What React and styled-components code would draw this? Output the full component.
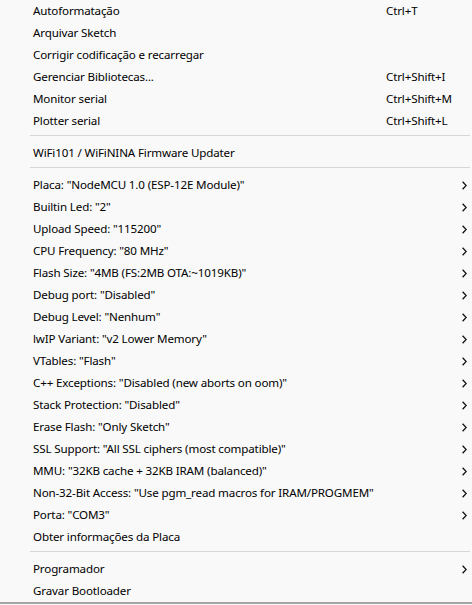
import styled, { createGlobalStyle } from 'styled-components';

const GlobalStyle = createGlobalStyle`
  html, body {
    margin: 0;
    padding: 0;
    background: #f9f9f9;
  }
  body {
    font-family: 'Noto Sans', 'Liberation Sans', sans-serif;
    font-size: 11.6px;
    letter-spacing: -0.15px;
    color: #000;
  }
`;

const groups = [
  [
    { label: 'Autoformatação', shortcut: 'Ctrl+T' },
    { label: 'Arquivar Sketch' },
    { label: 'Corrigir codificação e recarregar' },
    { label: 'Gerenciar Bibliotecas...', shortcut: 'Ctrl+Shift+I' },
    { label: 'Monitor serial', shortcut: 'Ctrl+Shift+M' },
    { label: 'Plotter serial', shortcut: 'Ctrl+Shift+L' },
  ],
  [{ label: 'WiFi101 / WiFiNINA Firmware Updater' }],
  [
    { label: 'Placa: "NodeMCU 1.0 (ESP-12E Module)"', sub: true },
    { label: 'Builtin Led: "2"', sub: true },
    { label: 'Upload Speed: "115200"', sub: true },
    { label: 'CPU Frequency: "80 MHz"', sub: true },
    { label: 'Flash Size: "4MB (FS:2MB OTA:~1019KB)"', sub: true },
    { label: 'Debug port: "Disabled"', sub: true },
    { label: 'Debug Level: "Nenhum"', sub: true },
    { label: 'lwIP Variant: "v2 Lower Memory"', sub: true },
    { label: 'VTables: "Flash"', sub: true },
    { label: 'C++ Exceptions: "Disabled (new aborts on oom)"', sub: true },
    { label: 'Stack Protection: "Disabled"', sub: true },
    { label: 'Erase Flash: "Only Sketch"', sub: true },
    { label: 'SSL Support: "All SSL ciphers (most compatible)"', sub: true },
    { label: 'MMU: "32KB cache + 32KB IRAM (balanced)"', sub: true },
    { label: 'Non-32-Bit Access: "Use pgm_read macros for IRAM/PROGMEM"', sub: true },
    { label: 'Porta: "COM3"', sub: true },
    { label: 'Obter informações da Placa' },
  ],
  [
    { label: 'Programador', sub: true },
    { label: 'Gravar Bootloader' },
  ],
];

function Chevron() {
  return (
    <svg width='5' height='9' viewBox='0 0 5 9'>
      <path d='M0.6 0.8 L4.2 4.5 L0.6 8.2' fill='none' stroke='#111' strokeWidth='1.3' />
    </svg>
  );
}

function App() {
  return (
    <>
      <GlobalStyle />
      <Menu>
        {groups.map((items, gi) => (
          <Group key={gi}>
            {gi > 0 && <Separator />}
            {items.map((item) => (
              <Item key={item.label}>
                <Label>{item.label}</Label>
                <Shortcut>{item.shortcut}</Shortcut>
                <Arrow>{item.sub && <Chevron />}</Arrow>
              </Item>
            ))}
          </Group>
        ))}
      </Menu>
    </>
  );
}

const Menu = styled.div`
  width: 472px;
  background: #f9f9f9;
  border-bottom: 2px solid #a5a5a5;
  box-sizing: border-box;
`;

const Group = styled.div`
  display: flex;
  flex-direction: column;
`;

const Separator = styled.div`
  height: 1px;
  background: #d7d7d7;
  margin: 3px 2px 6px 30px;
`;

const Item = styled.div`
  display: grid;
  grid-template-columns: minmax(0, 1fr) 67px 14px;
  align-items: center;
  height: 22px;
  box-sizing: border-box;
  padding: 0 5px 1px 33px;
  white-space: nowrap;
`;

const Label = styled.span`
  overflow: visible;
`;

const Shortcut = styled.span``;

const Arrow = styled.span`
  display: flex;
  justify-content: flex-end;
  align-items: center;
  padding-top: 1px;
`;

export default App;
